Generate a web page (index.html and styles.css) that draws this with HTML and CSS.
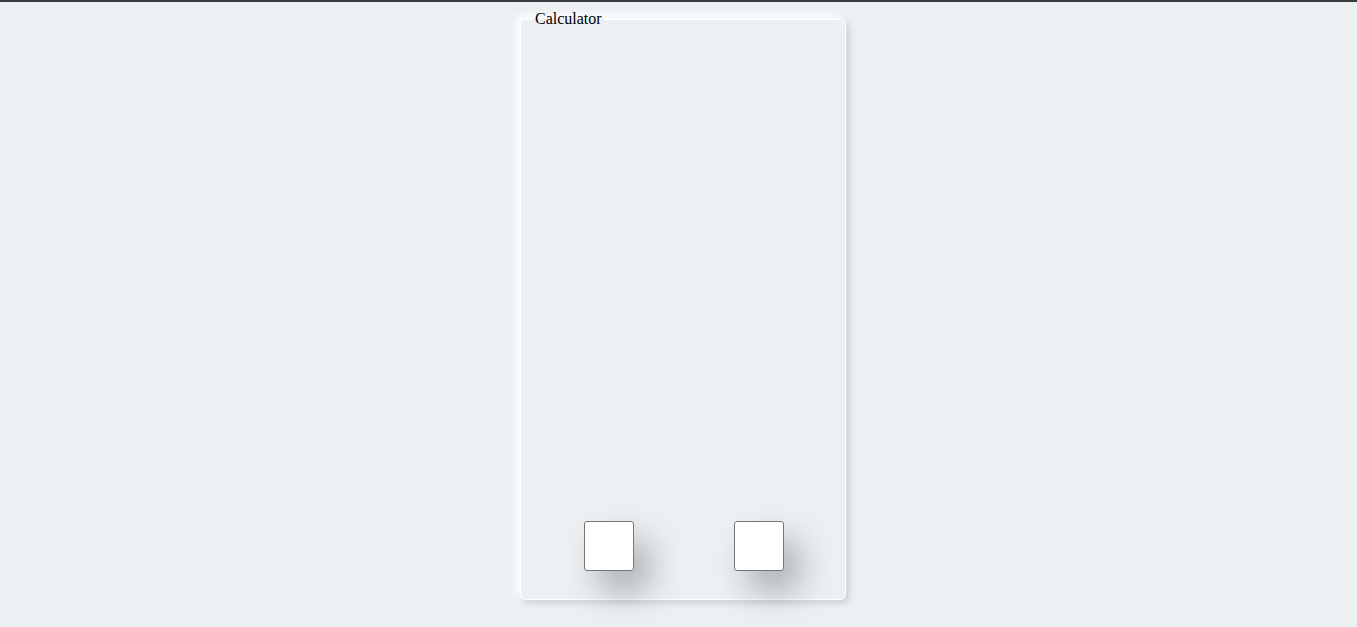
FILE: index.html
```html
<!DOCTYPE html>
<html>
<head>
<meta charset="utf-8">
<link rel="stylesheet" href="styles.css">
</head>
<body>
<div class="page">
  <form class="calc">
    <fieldset class="panel">
      <legend class="title">Calculator</legend>
      <div class="keys">
        <button type="button" class="key"></button>
        <button type="button" class="key"></button>
      </div>
    </fieldset>
  </form>
</div>
</body>
</html>
```
FILE: styles.css
```css
html {
  background: #ecf0f3;
}
body {
  margin: 0;
  border-top: 2px solid #3a3b3c;
  background: #ecf0f3;
  font-family: "Liberation Serif", "Times New Roman", serif;
  font-size: 16px;
  min-height: 625px;
}
.page {
  display: flex;
  justify-content: center;
  padding: 8px 0 0 9px;
}
.calc {
  margin: 0;
}
.panel {
  box-sizing: border-box;
  width: 326px;
  height: 590px;
  margin: 0;
  padding: 0 12px 28px 12px;
  border: 1px solid #ffffff;
  border-radius: 6px;
  background: #ecf0f3;
  box-shadow: -4px -4px 8px #ffffff, 3px 3px 6px #cbcbcf;
  display: flex;
  flex-direction: column;
  justify-content: flex-end;
}
.title {
  padding: 0 2px;
  line-height: 18px;
  color: #000;
}
.keys {
  display: flex;
  gap: 100px;
  padding-left: 51px;
}
.key {
  width: 50px;
  height: 50px;
  padding: 0;
  background: #ffffff;
  border: 1px solid #767676;
  border-radius: 3px;
  box-shadow: 15px 20px 34px rgba(0, 0, 0, 0.28);
}
```
